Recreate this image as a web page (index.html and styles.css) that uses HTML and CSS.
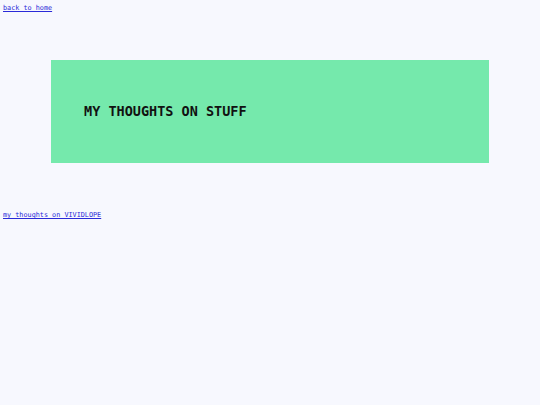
FILE: index.html
```html
<!DOCTYPE html>
<html>
<head>
<meta charset="utf-8">
<link rel="stylesheet" href="styles.css">
</head>
<body>
<nav class="top-nav"><a class="small-link" href="#">back to home</a></nav>
<header class="hero">
  <h1 class="hero-title">MY THOUGHTS ON STUFF</h1>
</header>
<ul class="posts">
  <li><a class="small-link" href="#">my thoughts on VIVIDLOPE</a></li>
</ul>
</body>
</html>
```

FILE: styles.css
```css
html, body {
  margin: 0;
  background: #f7f8fe;
}
body {
  padding: 4px 3px;
  font-family: "DejaVu Sans Mono", "Liberation Mono", monospace;
}
.top-nav, .posts {
  font-size: 6.8px;
  line-height: 9px;
}
.small-link {
  color: #2a2ad8;
}
.hero {
  margin: 47px auto 0;
  width: 438px;
  height: 103px;
  background: #75e9ac;
  display: flex;
  align-items: center;
  padding: 0 33px 2px;
  box-sizing: border-box;
}
.hero-title {
  margin: 0;
  font-size: 13.5px;
  font-weight: bold;
  color: #111;
  letter-spacing: 0;
}
.posts {
  list-style: none;
  margin: 48px 0 0;
  padding: 0;
}
```
